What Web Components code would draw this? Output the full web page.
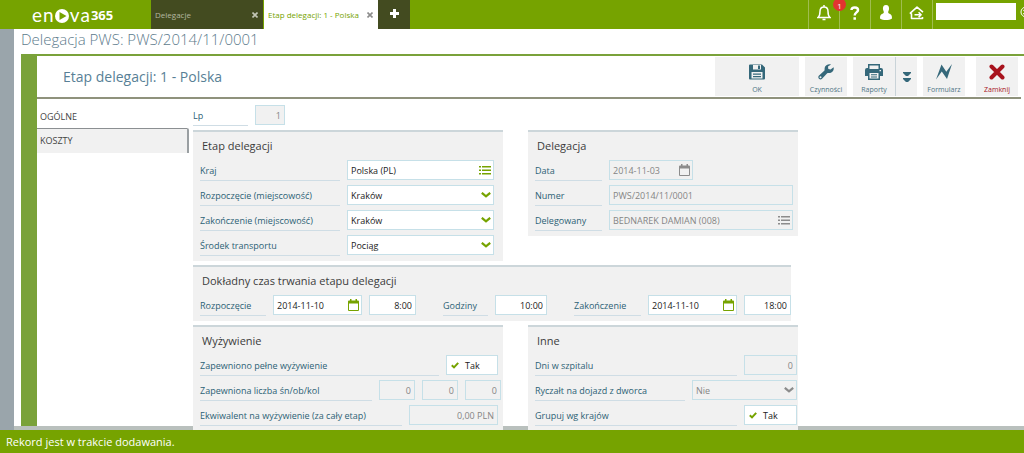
<!DOCTYPE html>
<html lang="pl">
<head>
<meta charset="utf-8">
<title>enova365 – Etap delegacji</title>
<style>
html,body{margin:0;height:100%;background:#fff}
body{font-family:"Open Sans","Noto Sans",sans-serif;font-size:9px;color:#222}
</style>
</head>
<body>
<enova-app></enova-app>
<script>
const icons = {
  save:`<svg viewBox="0 0 16 16" width="16" height="16"><path fill="#35687a" fill-rule="evenodd" d="M0 1.5Q0 .5 1 .5H13L16 3.5V14.5Q16 15.5 15 15.5H1Q0 15.5 0 14.5ZM4 1V5.5H12V1ZM9 1.5H11V5H9ZM2.5 8V14.5H13.5V8ZM4 9.5H12V10.7H4ZM4 12H12V13.2H4Z"/></svg>`,
  wrench:`<svg viewBox="0 0 16 16" width="16" height="16"><path fill="#35687a" d="M15.6 3.2 12.6 5.6 10.3 4.9 10 2.6 13 .4C10.600-.4 7.200.8 6.700 3.800 6.500 5 6.700 5.800 6.500 6.400L.8 11.700C-.8 13.500 1.700 16.500 3.800 15L9.200 9.300C10.200 8.900 10.900 9.300 12.200 8.900 15 8.200 16.200 5.600 15.600 3.200ZM2.500 14.200A1 1 0 1 1 2.500 12.200 1 1 0 0 1 2.500 14.200Z"/></svg>`,
  print:`<svg viewBox="0 0 18 16" width="18" height="16"><path fill="#35687a" fill-rule="evenodd" d="M3 0H15V4H16Q18 4 18 6V12H15V16H3V12H0V6Q0 4 2 4H3ZM4.500 1.500V5H13.500V1.500ZM4.500 9V14.500H13.500V9ZM6 10.300H12V11.300H6ZM6 12.400H12V13.400H6ZM14.500 6V7.300H16V6Z"/></svg>`,
  more:`<svg viewBox="0 0 8 10" width="8" height="10"><path fill="#35687a" d="M0 0H8V1L5 4H3L0 1ZM0 6H8V7L5 10H3L0 7Z"/></svg>`,
  bolt:`<svg viewBox="0 0 16 16" width="16" height="16"><path fill="#35687a" d="M0 15.500 5.500.500 10.300 7.800 16 0 11 15 5.800 7.600Z"/></svg>`,
  close:`<svg viewBox="0 0 16 16" width="16" height="16"><path fill="none" stroke="#a8131d" stroke-width="4" stroke-linecap="round" d="M2.500 2.500 13.500 13.500M13.500 2.500 2.500 13.500"/></svg>`,
  bell:`<svg viewBox="0 0 14 16" width="14" height="16"><path fill="none" stroke="#fff" stroke-width="1.500" d="M1 12.500C3 11 3 9 3 6.500 3 3.500 4.500 2 7 2 9.500 2 11 3.500 11 6.500 11 9 11 11 13 12.500ZM7 0V2M5.500 14.500H8.500"/></svg>`,
  help:`<svg viewBox="0 0 10 14" width="10" height="14"><path fill="none" stroke="#fff" stroke-width="2.500" d="M1.500 4C1.500.600 8 .600 8 4 8 6.500 4.700 6.300 4.700 9.500M4.700 11.200V13.700"/></svg>`,
  user:`<svg viewBox="0 0 12 15" width="12" height="15"><path fill="#fff" d="M6 0C9.500 0 9.500 4 8.500 6 8 7 8 8 9 8.500 11.500 9.500 12 10.500 12 13.500 9 15.500 3 15.500 0 13.500 0 10.500.5 9.500 3 8.500 4 8 4 7 3.500 6 2.500 4 2.500 0 6 0Z"/></svg>`,
  home:`<svg viewBox="0 0 16 14" width="16" height="14"><path fill="none" stroke="#fff" stroke-width="1.600" stroke-linejoin="round" d="M13.500 11V12.500H2.500V8L1.300 7.200 8 1.200 14 6.200M5.500 8.700H12M9.600 6.200 12.100 8.700 9.600 11.200"/></svg>`,
  smile:`<svg viewBox="0 0 12 12" width="12" height="12"><g fill="none" stroke="#fff"><circle cx="6" cy="6" r="5"/><path d="M3 7.500Q6 10 9 7.500"/></g><circle cx="4" cy="4.500" r=".8" fill="#fff"/></svg>`,
  plus:`<svg viewBox="0 0 9 9" width="9" height="9"><path fill="#fff" d="M3 0H6V3H9V6H6V9H3V6H0V3H3Z"/></svg>`,
  x:`<svg viewBox="0 0 6 6" width="6" height="6"><path fill="none" stroke="currentColor" stroke-width="1.600" d="M.5.500 5.500 5.500M5.500.500.500 5.500"/></svg>`,
  list:`<svg viewBox="0 0 12 9" width="12" height="9"><path fill="currentColor" d="M0 0H2V1.500H0ZM3 0H12V1.500H3ZM0 3.500H2V5H0ZM3 3.500H12V5H3ZM0 7H2V8.500H0ZM3 7H12V8.500H3Z"/></svg>`,
  chevron:`<svg viewBox="0 0 10 6" width="10" height="6"><path fill="none" stroke="currentColor" stroke-width="2.200" d="M.8.800 5 4.300 9.200.8"/></svg>`,
  calendar:`<svg viewBox="0 0 11 12" width="11" height="12"><path fill="currentColor" fill-rule="evenodd" d="M0 2.500Q0 1.500 1 1.500H2V0H3.500V1.500H7.500V0H9V1.500H10Q11 1.500 11 2.500V11Q11 12 10 12H1Q0 12 0 11ZM1 4.500V11H10V4.500Z"/></svg>`,
  play:`<svg viewBox="0 0 14 14" width="14" height="14"><circle cx="7" cy="7" r="7" fill="#fff"/><path fill="#76a300" d="M4.500 3 11.500 7 4.500 11Z"/></svg>`
};
const define = (name, html) => customElements.define(name, class extends HTMLElement {
  connectedCallback() {
    if (this.shadowRoot) return;
    const t = document.createElement('template');
    t.innerHTML = typeof html === 'function' ? html(this) : html;
    this.attachShadow({mode:'open'}).append(t.content.cloneNode(true));
  }
});
const reset = `*{box-sizing:border-box}svg{display:block;flex:none}button,input,select{font:inherit;color:inherit;margin:0;padding:0;border:0;background:none;border-radius:0;outline:0}`;

define('app-tab', e => `<style>${reset}
:host{display:flex;align-items:center;justify-content:space-between;height:29px;padding:0 5px 0 4px;font-size:8px;color:#b4b8a0;background:#434b20;white-space:nowrap;box-sizing:border-box}
:host([active]){background:#fff;color:#76a300}
button{color:#c3c6b5}
:host([active]) button{color:#8c8c8c}
a{color:inherit;text-decoration:none}
</style><a href="#"><slot></slot></a><button aria-label="Zamknij kartę">${icons.x}</button>`);

define('top-bar', `<style>${reset}
:host{display:flex;height:29px;flex:none;background:#76a300;overflow:hidden}
.logo{width:151px;flex:none;display:flex;align-items:center;padding-left:32px;gap:1px;color:#fff;font:19px/26px Lato,sans-serif}
.logo svg{margin-top:2px}
.logo b{font:bold 13px/26px "Open Sans",sans-serif}
app-tab.first{width:112px}app-tab.second{width:114px}
nav{display:flex;gap:1px;flex:none}
.add{width:32px;height:29px;margin-left:-1px;background:#434b20;display:grid;place-items:center;padding-bottom:2px}
.tools{margin-left:auto;display:flex;flex:none}
.tools button{width:31px;height:29px;border-left:1px solid #a0bd50;display:grid;place-items:center;padding-bottom:4px;position:relative}
.badge{position:absolute;left:24px;top:-2px;width:13px;height:13px;padding-top:2px;border-radius:50%;background:#e2342f;color:#fff;font-size:8px;line-height:11px;text-align:center;z-index:1}
.search{border-left:1px solid #a0bd50;padding:3px 4px 0 3px}
input{display:block;width:80px;height:17px;background:#fff;color:#222}
.smile{width:4px;overflow:hidden;padding-top:6px}
</style>
<div class="logo"><span>e</span><span>n</span>${icons.play}<span>v</span><span>a</span><b>365</b></div>
<nav aria-label="Karty"><app-tab class="first">Delegacje</app-tab><app-tab class="second" active>Etap delegacji: 1 - Polska</app-tab><button class="add" aria-label="Nowa karta">${icons.plus}</button></nav>
<div class="tools"><button aria-label="Powiadomienia">${icons.bell}<span class="badge">1</span></button><button aria-label="Pomoc">${icons.help}</button><button aria-label="Użytkownik">${icons.user}</button><button aria-label="Wyloguj">${icons.home}</button><div class="search"><input type="search" aria-label="Szukaj"></div><div class="smile">${icons.smile}</div></div>`);

define('tool-button', e => `<style>${reset}
:host{display:block;width:42px;height:39px;font-size:7px;color:#4f7585;background:#f1f1f1}
:host([danger]){color:#a8131d}
button{width:100%;height:100%;display:flex;flex-direction:column;align-items:center;justify-content:space-between;padding:7px 0 0;line-height:12px;white-space:nowrap}
:host([compact]) button{justify-content:center;padding-top:0}
</style><button aria-label="${e.textContent || 'Więcej raportów'}">${icons[e.getAttribute('icon')]}<slot></slot></button>`);

let n = 0;
define('form-field', e => {
  const id = 'f' + n++, kind = e.getAttribute('kind') || 'text';
  const values = e.getAttribute('value').split('|'), dis = e.hasAttribute('off') ? 'disabled' : '';
  const label = e.getAttribute('label');
  const box = (v, i) => {
    const fid = id + (i ? '-' + i : ''), aria = i ? `aria-label="${label} ${i + 1}"` : '';
    if (kind === 'select') return `<span class="box"><select id="${fid}" ${dis}><option>${v}</option></select>${icons.chevron}</span>`;
    if (kind === 'check') return `<label class="box check"><input type="checkbox" id="${fid}" checked><svg viewBox="0 0 8 7" width="8" height="7"><path fill="none" stroke="currentColor" stroke-width="2" d="M.800 3.200 3 5.400 7.200.8"/></svg><span>${v}</span></label>`;
    const date = kind.startsWith('date') && i === 0;
    const icon = date ? 'calendar' : kind === 'lookup' ? 'list' : '';
    return `<span class="box ${date ? 'date' : ''} ${kind === 'datetime' && i ? 'time' : ''}"><input type="text" id="${fid}" ${aria} value="${v}" ${dis}>${icon ? `<button ${dis} aria-label="Wybierz: ${label}">${icons[icon]}</button>` : ''}</span>`;
  };
  return `<style>${reset}
:host{display:flex;gap:7px;height:21px;color:#222}
.name{flex:1;min-width:0;height:21px;line-height:21px;border-bottom:1px solid #cfdde5;color:#2c6175;white-space:nowrap}
.box{width:var(--box,147px);height:20px;flex:none;display:flex;align-items:center;background:#fff;border:1px solid #c6e0e8;padding:0 2px 0 3px;color:#76a300}
.box input,.box select{flex:1;min-width:0;width:100%;height:18px;color:#222;appearance:none;text-align:var(--align,left)}
:host([off]) .box{background:#f1f1f1;color:#8c8c8c}
:host([off]) input,:host([off]) select{color:#858585;opacity:1}
.date{width:var(--date,89px)}
.time{width:var(--time,47px)}.time input{text-align:right}
.box:has(input:last-child){padding-right:3px}
.check{gap:6px;padding:0 4px}.box.check input{position:absolute;opacity:0;width:8px;height:8px}.check span{color:#222}
</style><label class="name" for="${id}">${label}</label>${values.map(box).join('')}`;
});

define('form-group', e => `<style>
:host{display:block;box-sizing:border-box;background:#f1f1f1;border-top:2px solid #ccd6da;padding:0 var(--end,5px) 5px 7px;position:relative;z-index:2}
h3{margin:0;padding-left:2px;height:28px;font-size:11px;line-height:28px;font-weight:400;color:#3c3c3c;white-space:nowrap}
.rows{display:grid;gap:4px}
:host([inline]) .rows{display:flex;gap:0;justify-content:space-between}
</style><h3>${e.getAttribute('heading')}</h3><div class="rows"><slot></slot></div>`);

define('stage-form', `<style>
:host{display:block;padding:6px 0 0 4px;min-width:0}
.lp{width:92px;--box:30px;--align:right;margin-bottom:4px}
.groups{display:grid;grid-template-columns:310px 270px;column-gap:25px;row-gap:4px;align-items:start}
.wide{grid-column:1/-1;width:598px;--end:0px}
.country{--end:9px}.other{--end:1px;--box:53px}
.food{--box:52px}
.meals{--box:36px;margin-right:-3px}
.right{--align:right}
</style>
<form-field class="lp" label="Lp" value="1" off></form-field>
<div class="groups">
<form-group class="country" heading="Etap delegacji">
<form-field label="Kraj" value="Polska (PL)" kind="lookup"></form-field>
<form-field label="Rozpoczęcie (miejscowość)" value="Kraków" kind="select"></form-field>
<form-field label="Zakończenie (miejscowość)" value="Kraków" kind="select"></form-field>
<form-field label="Środek transportu" value="Pociąg" kind="select"></form-field>
</form-group>
<form-group heading="Delegacja" style="--box:184px">
<form-field label="Data" value="2014-11-03" kind="date" off style="--date:84px;width:158px"></form-field>
<form-field label="Numer" value="PWS/2014/11/0001" off></form-field>
<form-field label="Delegowany" value="BEDNAREK DAMIAN (008)" kind="lookup" off></form-field>
</form-group>
<form-group class="wide" inline heading="Dokładny czas trwania etapu delegacji">
<form-field label="Rozpoczęcie" value="2014-11-10|8:00" kind="datetime" style="width:216px"></form-field>
<form-field label="Godziny" value="10:00" style="width:104px;--box:52px;--align:right"></form-field>
<form-field label="Zakończenie" value="2014-11-10|18:00" kind="datetime" style="width:217px"></form-field>
</form-group>
<form-group class="food" heading="Wyżywienie">
<form-field label="Zapewniono pełne wyżywienie" value="Tak" kind="check"></form-field>
<form-field class="meals right" label="Zapewniona liczba śn/ob/kol" value="0|0|0" off></form-field>
<form-field class="right" label="Ekwiwalent na wyżywienie (za cały etap)" value="0,00 PLN" off style="--box:89px"></form-field>
</form-group>
<form-group class="other" heading="Inne">
<form-field class="right" label="Dni w szpitalu" value="0" off></form-field>
<form-field label="Ryczałt na dojazd z dworca" value="Nie" kind="select" off style="--box:105px"></form-field>
<form-field label="Grupuj wg krajów" value="Tak" kind="check"></form-field>
</form-group>
</div>`);

define('side-menu', `<style>
:host{display:block;width:152px;flex:none;padding-top:5px;font-size:9px}
a{display:block;box-sizing:border-box;height:24px;line-height:25px;padding-left:3px;color:#444;text-decoration:none}
a.sel{height:25px;line-height:24px;background:#f1f1f1;border-top:1px solid #8b8f92;border-right:2px solid #9a9fa2;border-top-right-radius:2px}
</style><a href="#">OGÓLNE</a><a href="#" class="sel">KOSZTY</a>`);

define('enova-app', `<style>${reset}
:host{display:flex;flex-direction:column;height:100vh}
main{flex:1;min-height:0;display:flex;overflow:hidden;position:relative;border-left:14px solid #9aa5ab}
main::after{content:"";position:absolute;left:-14px;right:0;bottom:0;height:4px;background:#b9c0bd;z-index:1}
.page{flex:1;min-width:0;padding-left:7px;display:flex;flex-direction:column}
h1{margin:0;height:25px;flex:none;font-size:15px;font-weight:300;line-height:20px;color:#5d7b8c;white-space:nowrap}
.panel{flex:1;border-top:2px solid #7aa23a;border-left:16px solid #7aa23a}
.head{display:flex;align-items:flex-start;height:43px;padding-top:1px;margin-right:3px;border-bottom:2px solid #8f927c}
h2{margin:0 auto 0 0;padding-left:26px;font-size:14px;font-weight:400;line-height:40px;color:#587f96;white-space:nowrap}
.bar{display:flex;gap:6px;padding-right:3px}
.ok{width:84px}.split{display:flex;gap:1px;background:#c9d3d8}.drop{width:21px}.zam{margin-left:5px}
.body{display:flex}
footer{flex:none;height:23px;background:#76a300;color:#fff;font-size:11px;line-height:23px;padding-left:6px;position:relative;z-index:3}
</style>
<top-bar></top-bar>
<main><div class="page"><h1>Delegacja PWS: PWS/2014/11/0001</h1>
<section class="panel"><div class="head"><h2>Etap delegacji: 1 - Polska</h2>
<div class="bar"><tool-button class="ok" icon="save">OK</tool-button><tool-button icon="wrench">Czynności</tool-button><div class="split"><tool-button icon="print">Raporty</tool-button><tool-button class="drop" icon="more" compact></tool-button></div><tool-button icon="bolt">Formularz</tool-button><tool-button class="zam" icon="close" danger>Zamknij</tool-button></div></div>
<div class="body"><side-menu></side-menu><stage-form></stage-form></div></section></div></main>
<footer>Rekord jest w trakcie dodawania.</footer>`);
</script>
</body>
</html>
